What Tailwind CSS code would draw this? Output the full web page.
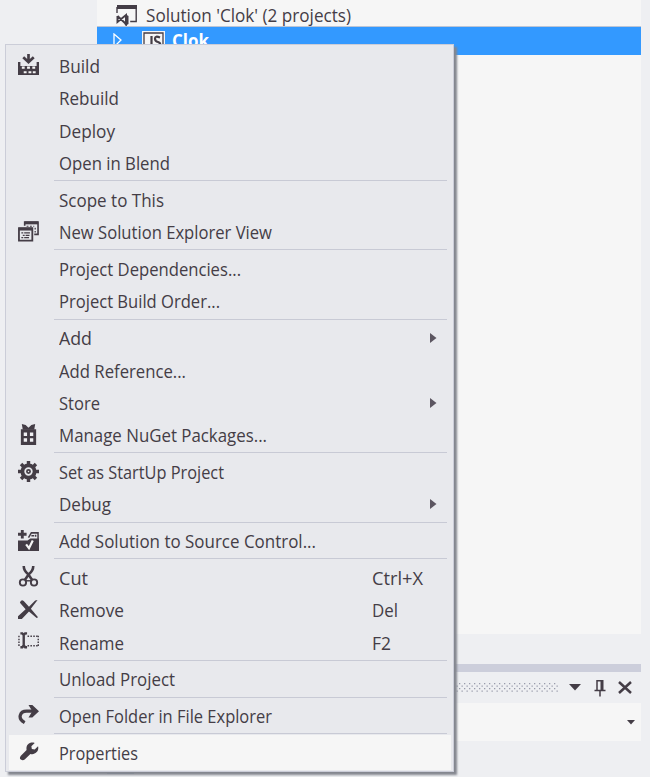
<!DOCTYPE html>
<html lang="en">
<head>
<meta charset="utf-8">
<title>Solution Explorer</title>
<script src="https://cdn.jsdelivr.net/npm/@tailwindcss/browser@4"></script>
</head>
<body class="relative w-[650px] h-[777px] overflow-hidden bg-[#eeeff2] text-[#443d46] text-[17.5px] font-['Open_Sans','Noto_Sans',sans-serif]">

<!-- Solution Explorer pane -->
<main class="ml-[97px] w-[544px] h-full flex flex-col">
  <section class="h-[634px] bg-[#f6f6f6]">
    <div class="h-[26px] flex items-center pl-[19px] pt-[3px]">
      <svg class="w-[22px] h-[22px] shrink-0" viewBox="0 0 22 22" fill="none" stroke="#443d46"><path d="M1 3h20" stroke-width="4"/><path d="M1 3v6M20.200 4v13.500h-6" stroke-width="1.400"/><path d="M1.500 12v6l8.500-7v9l-8.500-8M9 11l2.500 1.500v7L9 21" stroke-width="2"/></svg>
      <span class="ml-[8px] whitespace-pre inline-block origin-left leading-[24px]" data-w="204">Solution 'Clok' (2 projects)</span>
    </div>
    <div class="h-[29px] border-t border-[#bcc5d5] bg-[#3399ff] flex pl-[16px] text-white font-bold">
      <svg class="w-[10px] h-[16px] mt-[6px]" viewBox="0 0 10 16" fill="none" stroke="#fff" stroke-width="1.300"><path d="M1 1v13l7-7z"/></svg>
      <svg class="w-[23px] h-[24px] ml-[19px] mt-[4px]" viewBox="0 0 23 24"><path d="M0 0h23v24H0z" fill="#f6f6f6"/><path d="M2 2h19v19H2z" fill="none" stroke="#443d46" stroke-width="1.300"/><path d="M9.500 5v9q0 3-4 2M18 6.500q-5-2-5 1t3 3.500q3 1 2 3.500t-6 1" fill="none" stroke="#443d46" stroke-width="2.200"/></svg>
      <span class="ml-[7px] inline-block origin-left leading-[27px]" data-w="36" data-weight="bold">Clok</span>
    </div>
  </section>
  <div class="mt-[30px] h-[8px] bg-[#cccedb]"></div>
  <div class="h-[31px] flex items-center justify-end pr-[9px]">
    <svg class="w-[110px] h-[9px] mr-[10px]" viewBox="0 0 110 9"><defs><pattern id="grip" width="5" height="5" patternUnits="userSpaceOnUse"><path d="M0 0h1.300v1.300H0zM2.500 2.500h1.300v1.300H2.500z" fill="#9a9cab"/></pattern></defs><path d="M0 0h110v9H0z" fill="url(#grip)"/></svg>
    <svg class="w-[12px] h-[7px]" viewBox="0 0 12 7"><path d="M0 0h12L6 6.500z" fill="#443d46"/></svg>
    <svg class="w-[12px] h-[18px] ml-[13px]" viewBox="0 0 12 18" fill="none" stroke="#443d46"><path d="M3 11V1.700h5" stroke-width="1.500"/><path d="M8 1v10" stroke-width="3"/><path d="M.5 11.500h11M6 11v6.500" stroke-width="1.500"/></svg>
    <svg class="w-[14px] h-[13px] ml-[12px]" viewBox="0 0 14 13"><path d="M1 1l12 11M13 1L1 12" stroke="#443d46" stroke-width="2.500"/></svg>
  </div>
  <div class="h-[38px] bg-[#f6f6f6] flex items-center justify-end pr-[6px]">
    <svg class="w-[8px] h-[5px]" viewBox="0 0 8 5"><path d="M0 0h8L4 4.500z" fill="#443d46"/></svg>
  </div>
</main>
<div class="absolute left-[107px] top-[773px] w-[27px] h-[1px] bg-[#6688b4]"></div>

<!-- Context menu -->
<nav id="menu" class="absolute left-[5px] top-[44px] w-[449px] h-[728px] bg-[#e8e9ed] border border-[#cbcdd8] shadow-[3px_3px_2px_#84878f] pt-[4.800px] flex flex-col"></nav>

<!-- Menu icons -->
<template id="icons">
  <svg data-icon="build" viewBox="0 0 22 22"><path d="M0 8.500h2.500v4h17v-4H22V22H0z" fill="#443d46"/><path d="M4 13h3v2.500H4zM9.500 13h3v2.500h-3zM15 13h3v2.500h-3zM6 18h3v2.200H6zM11 18h3v2.200h-3zM15.500 18h3v2.200h-3z" fill="#f6f6f6"/><path d="M11 0v8M5.500 3.500L11 8.500l5.500-5" fill="none" stroke="#443d46" stroke-width="2.800"/></svg>
  <svg data-icon="view" viewBox="0 0 22 22" fill="none" stroke="#443d46"><path d="M7 5V1h14v13h-4" stroke-width="1.700"/><path d="M7 2h14" stroke-width="3"/><path d="M9 5.500h8M18 7v5" stroke-width="1.300" stroke-dasharray="2 1.500"/><path d="M1 7.500h14v13H1z" stroke-width="1.900"/><path d="M1 8.500h14" stroke-width="3"/><path d="M3.500 12.500h2m1 0h6M5 15h2m1 0h4M3.500 17.500h2m1 0h5" stroke-width="1.400"/></svg>
  <svg data-icon="nuget" viewBox="0 0 22 22"><path d="M3 5.500h16V22H3z" fill="#443d46"/><path d="M4 0l4 1 3 3 3-3 4-1-1 6H5z" fill="#443d46"/><path d="M6 9h3.500v3.500H6zM12.500 9H16v3.500h-3.500zM6 15h3.500v3.500H6zM12.500 15H16v3.500h-3.500z" fill="#f0f0f3"/></svg>
  <svg data-icon="gear" viewBox="0 0 22 22" fill="none" stroke="#443d46"><circle cx="11" cy="11" r="6.400" stroke-width="4"/><path d="M11 0v4M11 18v4M0 11h4M18 11h4M3.200 3.200l3 3M15.800 15.800l3 3M18.800 3.200l-3 3M6.200 15.800l-3 3" stroke-width="3.600"/><circle cx="11" cy="11" r="1.700" stroke-width="1.800"/></svg>
  <svg data-icon="source" viewBox="0 0 22 22"><path d="M0 11h10l3-2h9v13H0z" fill="#443d46"/><path d="M4.500 0v9M0 4.500h9" stroke="#443d46" stroke-width="3"/><path d="M11 8l3-5h7v7" fill="none" stroke="#443d46" stroke-width="1.600"/><path d="M14 6h3M18.500 5v2" stroke="#443d46" stroke-width="1.500"/><path d="M8.500 15l3 4 4-8" fill="none" stroke="#f6f6f6" stroke-width="2.300"/></svg>
  <svg data-icon="cut" viewBox="0 0 22 22" fill="none" stroke="#443d46"><path d="M6 0q0 5 5 9l4 6M16 0q0 5-5 9l-4 6" stroke-width="2.700"/><circle cx="5.200" cy="17.300" r="3.300" stroke-width="2"/><circle cx="16.800" cy="17.300" r="3.300" stroke-width="2"/><path d="M8 15.500h6" stroke-width="1.500"/></svg>
  <svg data-icon="remove" viewBox="0 0 22 22"><path d="M2 4q1-4 4-2l5.500 6L18 1.500 20.500 1 13.500 10.300 21 19l-1.500 1L11.500 13 4 21H0v-3l8-7.200z" fill="#443d46"/></svg>
  <svg data-icon="rename" viewBox="0 0 22 22" fill="none" stroke="#443d46"><path d="M2.500 2.500h2l1.500 2 1.500-2h2M6 4v11M2.500 17h2l1.500-2 1.500 2h2" stroke-width="2.500"/><path d="M10 5.500h12M10 15.500h12" stroke-width="1.500" stroke-dasharray="1.600 1.400"/><path d="M1 5v11M21.200 5v11" stroke-width="1.500" stroke-dasharray="1.600 1.400"/></svg>
  <svg data-icon="open" viewBox="0 0 22 22" fill="none" stroke="#443d46"><path d="M7 18.500C-1 14 2 6.500 9 6.500h10" stroke-width="3.400"/><path d="M11 0h4l7 6.500-7 6.500h-4l4-6.500z" fill="#443d46" stroke="none"/></svg>
  <svg data-icon="wrench" viewBox="0 0 22 22"><path d="M3 15.500l6-6C8 4 12 .5 17.500 2L14 5.500l.5 3 3 .5L21 5.500C22.500 11 17.500 15 13 13.500L7 19.500q-2 1.500-4 0t0-4z" fill="#443d46"/></svg>
</template>

<script>
const items = [
  ['Build', 40, 'build'], ['Rebuild', 59], ['Deploy', 55], ['Open in Blend', 110], null,
  ['Scope to This', 104], ['New Solution Explorer View', 212, 'view'], null,
  ['Project Dependencies...', 181], ['Project Build Order...', 160], null,
  ['Add', 32, '', '>'], ['Add Reference...', 126], ['Store', 40, '', '>'], ['Manage NuGet Packages...', 207, 'nuget'], null,
  ['Set as StartUp Project', 164, 'gear'], ['Debug', 51, '', '>'], null,
  ['Add Solution to Source Control...', 256, 'source'], null,
  ['Cut', 28, 'cut', 'Ctrl+X', 50], ['Remove', 64, 'remove', 'Del', 25], ['Rename', 64, 'rename', 'F2', 18], null,
  ['Unload Project', 115], null,
  ['Open Folder in File Explorer', 212, 'open'], null,
  ['Properties', 78, 'wrench']
];
const icons = document.getElementById('icons').content;
document.getElementById('menu').innerHTML = items.map(item => {
  if (!item) return '<div class="h-[4.400px] shrink-0 pt-[1px] pl-[48px] pr-[6px]"><div class="h-[1px] bg-[#c8cad5]"></div></div>';
  const [label, width, icon, extra, extraWidth] = item;
  const selected = label === 'Properties';
  const rowClass = selected
    ? 'relative h-[35px] -mt-[1.500px] ml-[3px] mr-[2px] pl-[9px] flex items-center shrink-0 bg-[#f6f6f6]'
    : 'relative h-[32.380px] pl-[12px] flex items-center shrink-0';
  const iconSvg = icon ? icons.querySelector('[data-icon="' + icon + '"]').outerHTML.replace('<svg', '<svg class="w-[21px] h-[21px] relative -top-px"') : '';
  const end = extra === '>'
    ? '<svg class="w-[7px] h-[10px] ml-auto mr-[16px]" viewBox="0 0 7 10"><path d="M0 0l6.500 5L0 10z" fill="#5c5661"/></svg>'
    : extra ? '<span class="w-[81px] ml-auto"><span class="inline-block whitespace-pre origin-left leading-[24px]" data-w="' + extraWidth + '">' + extra + '</span></span>' : '';
  return '<div class="' + rowClass + '"><span class="w-[21px] mr-[20px] shrink-0">' + iconSvg + '</span><span class="inline-block whitespace-pre origin-left leading-[24px]" data-w="' + width + '">' + label + '</span>' + end + '</div>';
}).join('');
const ctx = document.createElement('canvas').getContext('2d');
document.querySelectorAll('[data-w]').forEach(el => {
  ctx.font = (el.dataset.weight || 'normal') + ' 17.5px "Open Sans"';
  el.style.transform = 'scaleX(' + (Number(el.dataset.w) + 1) / ctx.measureText(el.textContent).width + ')';
});
</script>
</body>
</html>
